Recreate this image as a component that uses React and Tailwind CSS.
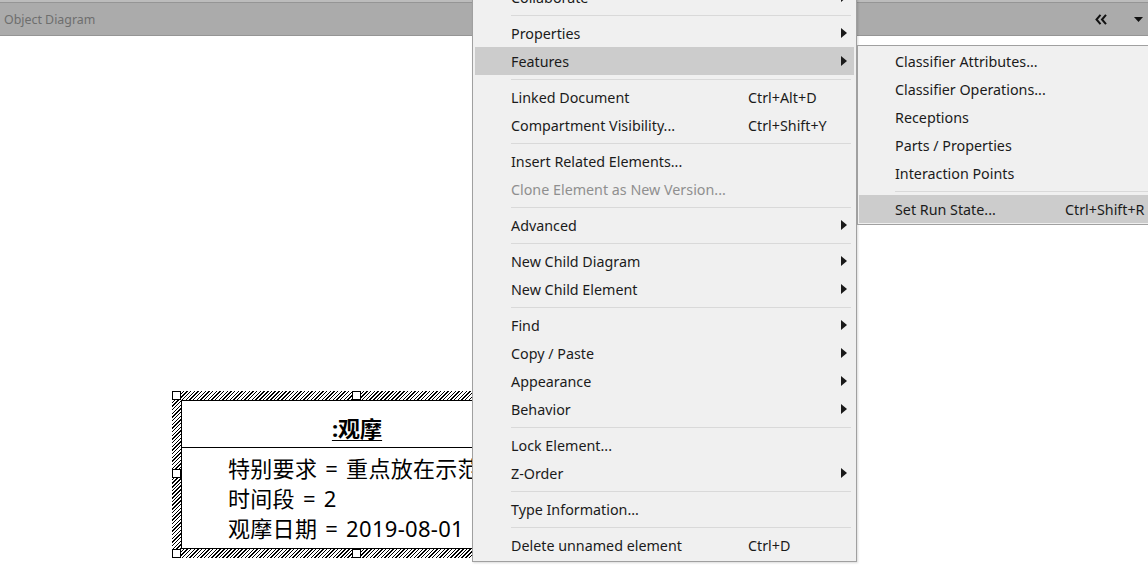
import React from 'react';

const mainMenu = [
  { label: 'Collaborate', arrow: true },
  { sep: true },
  { label: 'Properties', arrow: true },
  { label: 'Features', arrow: true, active: true },
  { sep: true },
  { label: 'Linked Document', shortcut: 'Ctrl+Alt+D' },
  { label: 'Compartment Visibility...', shortcut: 'Ctrl+Shift+Y' },
  { sep: true },
  { label: 'Insert Related Elements...' },
  { label: 'Clone Element as New Version...', disabled: true },
  { sep: true },
  { label: 'Advanced', arrow: true },
  { sep: true },
  { label: 'New Child Diagram', arrow: true },
  { label: 'New Child Element', arrow: true },
  { sep: true },
  { label: 'Find', arrow: true },
  { label: 'Copy / Paste', arrow: true },
  { label: 'Appearance', arrow: true },
  { label: 'Behavior', arrow: true },
  { sep: true },
  { label: 'Lock Element...' },
  { label: 'Z-Order', arrow: true },
  { sep: true },
  { label: 'Type Information...' },
  { sep: true },
  { label: 'Delete unnamed element', shortcut: 'Ctrl+D' },
];

const subMenu = [
  { label: 'Classifier Attributes...' },
  { label: 'Classifier Operations...' },
  { label: 'Receptions' },
  { label: 'Parts / Properties' },
  { label: 'Interaction Points' },
  { sep: true },
  { label: 'Set Run State...', shortcut: 'Ctrl+Shift+R', active: true },
];

const Arrow = () => (
  <svg width="6" height="10" viewBox="0 0 6 10" className="absolute right-[7px] top-[9px]">
    <polygon points="0,0 6,5 0,10" fill="#1a1a1a" />
  </svg>
);

const MenuItem = ({ item, shortcutLeft }) => {
  if (item.sep) {
    return (
      <div className="h-[8px] flex items-center pl-[36px] pr-[3px]">
        <div className="h-px w-full bg-[#d9d9d9]" />
      </div>
    );
  }
  return (
    <div
      className={`relative h-[28px] flex items-center pl-[36px] pt-[2px] whitespace-nowrap ${
        item.active ? 'bg-[#cccccc]' : ''
      } ${item.disabled ? 'text-[#8f8f8f]' : 'text-[#1b1b1b]'}`}
    >
      <span>{item.label}</span>
      {item.shortcut && (
        <span className={`absolute top-[1px] leading-[28px] ${shortcutLeft}`}>{item.shortcut}</span>
      )}
      {item.arrow && <Arrow />}
    </div>
  );
};

const Handle = ({ className }) => (
  <div className={`absolute w-[9px] h-[9px] bg-white border border-black ${className}`} />
);

export default function App() {
  return (
    <div className="relative w-[1148px] h-[587px] overflow-hidden bg-white font-['Noto_Sans','Open_Sans',sans-serif]">
      {/* diagram tab header */}
      <div className="h-[2px] bg-[#bcbcbc]" />
      <div className="h-[34px] bg-[#ababab] border-t border-b border-[#959595] flex items-center justify-between pl-[4px] pr-[5px] pt-[2px]">
        <span className="text-[12.4px] text-[#6e6e6e]">Object Diagram</span>
        <div className="flex items-center gap-[27px] pb-[1px]">
          <svg width="12" height="11" viewBox="0 0 12 11">
            <polyline points="5.5,0.8 1.5,5.5 5.5,10.2" fill="none" stroke="#111" strokeWidth="2" />
            <polyline points="11,0.8 7,5.5 11,10.2" fill="none" stroke="#111" strokeWidth="2" />
          </svg>
          <svg width="9" height="5" viewBox="0 0 9 5">
            <polygon points="0,0 9,0 4.5,5" fill="#111" />
          </svg>
        </div>
      </div>

      {/* object element on canvas */}
      <div className="absolute left-[172px] top-[391px] w-[370px] h-[167px] p-[9px] bg-[repeating-linear-gradient(135deg,#000_0px,#000_1px,#fff_1px,#fff_2.6px)]">
        <div className="w-full h-full bg-white border border-black flex flex-col font-['Noto_Sans','Noto_Sans_CJK_SC',sans-serif] text-[22px] text-black">
          <div className="h-[47px] flex items-end justify-center pb-[4px] border-b border-black">
            <span className="font-bold leading-[30px] underline underline-offset-[3px] decoration-1">:观摩</span>
          </div>
          <div className="pt-[5px] pl-[46px] leading-[30px] whitespace-nowrap tracking-[0.3px] [word-spacing:2px]">
            <div>特别要求 = 重点放在示范</div>
            <div>时间段 = 2</div>
            <div>观摩日期 = 2019-08-01</div>
          </div>
        </div>
        <Handle className="left-0 top-0" />
        <Handle className="left-[180px] top-0" />
        <Handle className="left-0 top-[78px]" />
        <Handle className="left-0 bottom-0" />
        <Handle className="left-[180px] bottom-0" />
      </div>

      {/* context menu */}
      <div className="absolute left-[472px] top-[-20px] w-[385px] bg-[#f0f0f0] border border-[#a0a0a0] py-[2px] px-[2px] text-[14.3px] shadow-[1px_1px_2px_rgba(0,0,0,0.15)]">
        {mainMenu.map((item, i) => (
          <MenuItem key={i} item={item} shortcutLeft="left-[273px]" />
        ))}
      </div>

      {/* features submenu */}
      <div className="absolute left-[857px] top-[45px] w-[320px] bg-[#f0f0f0] border border-[#a0a0a0] py-[1px] pl-[1px] text-[14.3px]">
        {subMenu.map((item, i) => (
          <MenuItem key={i} item={item} shortcutLeft="left-[206px]" />
        ))}
      </div>
    </div>
  );
}
